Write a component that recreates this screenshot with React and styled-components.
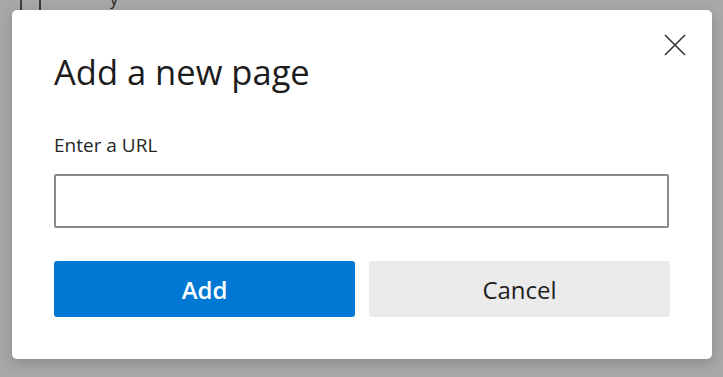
import React from "react";
import styled, { createGlobalStyle } from "styled-components";

const Global = createGlobalStyle`
   html, body {
      margin: 0;
      padding: 0;
      background: #a8a8a8;
      font-family: "Open Sans", "Noto Sans", sans-serif;
   }
`;

const Page = styled.div`
   position: relative;
   width: 723px;
   height: 377px;
   overflow: hidden;
   background: #a8a8a8;
`;

const Behind = styled.div`
   position: absolute;
   top: -14px;
   left: 20px;
   display: flex;
   align-items: center;
   gap: 68px;
   color: #1a1a1a;
   font-size: 16px;
`;

const Backdrop = styled.div`
   position: absolute;
   inset: 0;
   display: flex;
   align-items: flex-start;
   justify-content: flex-start;
   padding: 10px 0 0 12px;
`;

const Dialog = styled.div`
   position: relative;
   width: 700px;
   height: 349px;
   box-sizing: border-box;
   background: #fff;
   border-radius: 5px;
   box-shadow: 0 4px 14px rgba(0, 0, 0, 0.18);
   padding: 40px 42px 0 42px;
   display: flex;
   flex-direction: column;
`;

const Title = styled.h2`
   margin: 0;
   font-size: 34.5px;
   font-weight: 400;
   line-height: 44px;
   color: #1c1c1c;
`;

const Label = styled.label`
   margin-top: 38px;
   font-size: 19px;
   line-height: 26px;
   color: #262626;
`;

const Input = styled.input`
   margin-top: 16px;
   width: 615px;
   height: 54px;
   box-sizing: border-box;
   border: 2px solid #8a8a8a;
   border-radius: 2px;
   outline: none;
   padding: 0 10px;
   font-size: 16px;
   font-family: inherit;
`;

const Buttons = styled.div`
   margin-top: 33px;
   display: grid;
   grid-template-columns: 301px 301px;
   gap: 14px;
`;

const Button = styled.button`
   height: 56px;
   border: none;
   border-radius: 3px;
   font-family: inherit;
   font-size: 24px;
   font-weight: ${(p) => (p.$primary ? 600 : 400)};
   background: ${(p) => (p.$primary ? "#0078d4" : "#ebebeb")};
   color: ${(p) => (p.$primary ? "#fff" : "#1f1f1f")};
   cursor: pointer;
`;

const Close = styled.button`
   position: absolute;
   top: 18px;
   right: 20px;
   width: 34px;
   height: 34px;
   border: none;
   background: none;
   padding: 0;
   display: flex;
   align-items: center;
   justify-content: center;
   cursor: pointer;
`;

const App = () => {
   return (
      <Page>
         <Global />
         <Behind>
            <svg width="22" height="26" viewBox="0 0 22 26">
               <path d="M1 1h12l7 7v17H1z" fill="none" stroke="#1a1a1a" strokeWidth="1.5" />
            </svg>
            <span>y</span>
         </Behind>
         <Backdrop>
            <Dialog>
               <Close aria-label="Close">
                  <svg width="22" height="22" viewBox="0 0 22 22">
                     <path d="M1 1L21 21M21 1L1 21" stroke="#333" strokeWidth="1.6" />
                  </svg>
               </Close>
               <Title>Add a new page</Title>
               <Label>Enter a URL</Label>
               <Input type="text" />
               <Buttons>
                  <Button $primary>Add</Button>
                  <Button>Cancel</Button>
               </Buttons>
            </Dialog>
         </Backdrop>
      </Page>
   );
};

export default App;
